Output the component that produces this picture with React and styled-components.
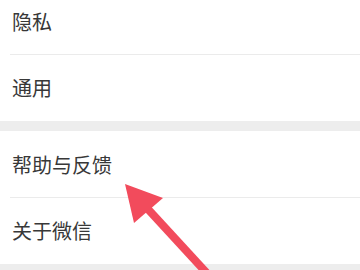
import React from "react";
import styled, { createGlobalStyle } from "styled-components";

const Global = createGlobalStyle`
  html, body {
    margin: 0;
    padding: 0;
    background: #ededed;
    font-family: "Noto Sans CJK SC", "Noto Sans", sans-serif;
    overflow: hidden;
  }
`;

const Page = styled.div`
  position: relative;
  width: 360px;
  height: 270px;
  overflow: hidden;
  background: #ededed;
`;

const Group = styled.div`
  background: #fff;
  margin-top: ${(p) => p.$offset || 0}px;
  margin-bottom: 10px;
`;

const Row = styled.div`
  display: flex;
  align-items: center;
  height: 66.5px;
  padding-left: 12px;
  font-size: 20px;
  color: #383838;
  position: relative;
  &::after {
    content: "";
    display: ${(p) => (p.$divider ? "block" : "none")};
    position: absolute;
    left: 10px;
    right: 0;
    bottom: 0;
    height: 1px;
    background: #ebebeb;
  }
`;

const Arrow = styled.svg`
  position: absolute;
  left: 0;
  top: 0;
  pointer-events: none;
`;

export default function App() {
  return (
    <Page>
      <Global />
      <Group $offset={-12}>
        <Row $divider>隐私</Row>
        <Row>通用</Row>
      </Group>
      <Group>
        <Row $divider>帮助与反馈</Row>
        <Row>关于微信</Row>
      </Group>
      <Arrow width="360" height="270" viewBox="0 0 360 270">
        <line x1="146" y1="207" x2="215" y2="282" stroke="#f24b5c" strokeWidth="8" />
        <polygon points="125,184 163,198 134,223" fill="#f24b5c" />
      </Arrow>
    </Page>
  );
}
